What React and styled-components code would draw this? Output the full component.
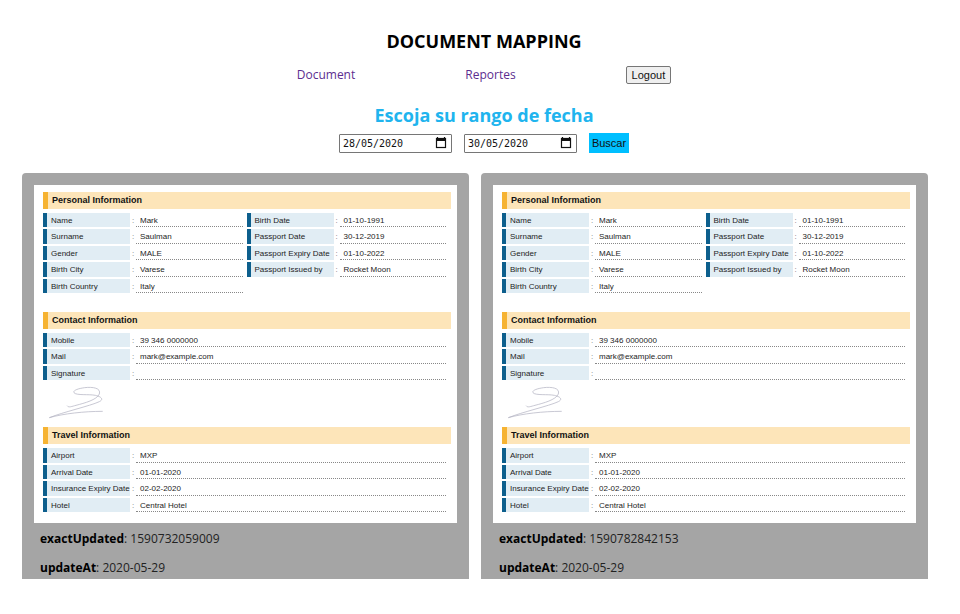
import React from 'react';
import styled, { createGlobalStyle } from 'styled-components';

const GlobalStyle = createGlobalStyle`
  *, *::before, *::after { box-sizing: border-box; }
  body {
    margin: 0;
    background: #fff;
    color: #000;
    font-family: "Open Sans", "Noto Sans", sans-serif;
    font-size: 12px;
    line-height: 16px;
  }
`;

const Page = styled.div`
  padding: 28px 0 32px 8px;
`;

const Title = styled.h1`
  margin: 0;
  font-size: 18px;
  line-height: 26px;
  font-weight: 700;
  text-align: center;
`;

const Nav = styled.nav`
  display: flex;
  justify-content: center;
  align-items: center;
  gap: 110px;
  margin-top: 12px;
`;

const NavLink = styled.a`
  color: #5c2d8f;
  text-decoration: none;
`;

const LogoutButton = styled.button`
  height: 18px;
  padding: 0 5px;
  border: 1px solid #767676;
  border-radius: 2px;
  background: #efefef;
  color: #111;
  font: 11px/16px "Liberation Sans", Arial, sans-serif;
`;

const Heading = styled.h2`
  margin: 18px 0 5px;
  color: #20b4ee;
  font-size: 18px;
  line-height: 26px;
  font-weight: 700;
  text-align: center;
`;

const Filters = styled.form`
  display: flex;
  justify-content: center;
  align-items: center;
  gap: 12px;
`;

const DateField = styled.label`
  display: flex;
  align-items: center;
  width: 113px;
  height: 19px;
  padding: 0 4px 0 3px;
  border: 1px solid #767676;
  border-radius: 1px;
`;

const DateInput = styled.input`
  flex: 1;
  min-width: 0;
  height: 17px;
  padding: 0;
  border: 0;
  outline: 0;
  background: transparent;
  color: #111;
  font: 10px/17px "DejaVu Sans Mono", monospace;
`;

const SearchButton = styled.button`
  height: 20px;
  padding: 0 3px;
  border: 0;
  background: #00bfff;
  color: #111;
  font: 11px/20px "Liberation Sans", Arial, sans-serif;
`;

const Cards = styled.main`
  display: grid;
  grid-template-columns: 1fr 1fr;
  gap: 12px;
  margin: 20px 32px 0 14px;
`;

const Card = styled.article`
  padding: 12px 12px 0;
  border-radius: 4px 4px 0 0;
  background: #a5a5a5;
`;

const Sheet = styled.div`
  padding: 7px 6px 11px 9px;
  background: #fff;
  color: #1c1c1c;
  font-family: "Liberation Sans", Arial, sans-serif;
  font-size: 8px;
`;

const SectionTitle = styled.h3`
  margin: 0 0 4px;
  padding-left: 4px;
  border-left: 5px solid #f6b332;
  background: #fde5b9;
  color: #111;
  font-size: 9px;
  line-height: 17px;
  font-weight: 700;
`;

const Fields = styled.dl`
  display: grid;
  grid-template-columns: repeat(${(p) => p.$columns}, 1fr);
  grid-template-rows: repeat(${(p) => p.$rows}, minmax(0, 1fr));
  grid-auto-flow: column;
  gap: 2px 4px;
  height: ${(p) => p.$height}px;
  margin: 0 5px ${(p) => p.$after}px 0;
`;

const Field = styled.div`
  display: grid;
  grid-template-columns: 87px 6px 1fr;
  grid-template-rows: minmax(0, 1fr);
  line-height: 15px;
`;

const FieldName = styled.dt`
  padding-left: 4px;
  border-left: 4px solid #0d5f8d;
  background: #e1edf4;
  white-space: nowrap;
`;

const Colon = styled.span`
  padding-left: 2px;
  color: #777;
`;

const FieldValue = styled.dd`
  margin: 0;
  padding-left: 4px;
  border-bottom: 1px dotted #888;
`;

const SignatureSvg = styled.svg`
  display: block;
  width: 80px;
  height: 45px;
  margin-bottom: 2px;
`;

const MetaList = styled.div`
  display: flex;
  flex-direction: column;
  gap: 13px;
  padding: 8px 6px 3px;
`;

const Meta = styled.p`
  margin: 0;
  color: #222;
`;

const MetaName = styled.strong`
  color: #000;
`;

const sections = [
  {
    title: 'Personal Information',
    columns: 2,
    rows: 5,
    height: 80,
    after: 19,
    fields: [
      ['Name', 'Mark'],
      ['Surname', 'Saulman'],
      ['Gender', 'MALE'],
      ['Birth City', 'Varese'],
      ['Birth Country', 'Italy'],
      ['Birth Date', '01-10-1991'],
      ['Passport Date', '30-12-2019'],
      ['Passport Expiry Date', '01-10-2022'],
      ['Passport Issued by', 'Rocket Moon'],
    ],
  },
  {
    title: 'Contact Information',
    columns: 1,
    rows: 3,
    height: 47,
    after: 0,
    signed: true,
    fields: [
      ['Mobile', '39 346 0000000'],
      ['Mail', 'mark@example.com'],
      ['Signature', ''],
    ],
  },
  {
    title: 'Travel Information',
    columns: 1,
    rows: 4,
    height: 64,
    after: 0,
    fields: [
      ['Airport', 'MXP'],
      ['Arrival Date', '01-01-2020'],
      ['Insurance Expiry Date', '02-02-2020'],
      ['Hotel', 'Central Hotel'],
    ],
  },
];

const documents = [
  { exactUpdated: '1590732059009', updateAt: '2020-05-29' },
  { exactUpdated: '1590782842153', updateAt: '2020-05-29' },
];

function CalendarIcon() {
  return (
    <svg width="12" height="12" viewBox="0 0 12 12" aria-hidden="true">
      <path d="M2.5 0v2M9.5 0v2" stroke="#111" strokeWidth="1.2" />
      <path d="M1 1h10v3H1z" fill="#111" />
      <rect x="1.5" y="1.5" width="9" height="9" fill="none" stroke="#111" strokeWidth="1.2" />
    </svg>
  );
}

function Signature() {
  return (
    <SignatureSvg viewBox="9 0 240 135" role="img" aria-label="Signature">
      <path
        d="M82 78C86 84 96 79 108 76C134 69 170 60 178 42C184 24 158 20 134 23C112 26 98 32 102 38C108 47 148 42 166 46C184 50 192 58 178 65C150 78 70 96 28 113C70 101 132 94 187 94"
        fill="none"
        stroke="#b4b4c2"
        strokeWidth="2.2"
        strokeLinecap="round"
      />
    </SignatureSvg>
  );
}

function DocumentCard({ doc }) {
  return (
    <Card>
      <Sheet>
        {sections.map((s) => (
          <section key={s.title}>
            <SectionTitle>{s.title}</SectionTitle>
            <Fields $columns={s.columns} $rows={s.rows} $height={s.height} $after={s.after}>
              {s.fields.map(([name, value]) => (
                <Field key={name}>
                  <FieldName>{name}</FieldName>
                  <Colon>:</Colon>
                  <FieldValue>{value}</FieldValue>
                </Field>
              ))}
            </Fields>
            {s.signed && <Signature />}
          </section>
        ))}
      </Sheet>
      <MetaList>
        <Meta><MetaName>exactUpdated</MetaName>: {doc.exactUpdated}</Meta>
        <Meta><MetaName>updateAt</MetaName>: {doc.updateAt}</Meta>
      </MetaList>
    </Card>
  );
}

export default function App() {
  return (
    <Page>
      <GlobalStyle />
      <Title>DOCUMENT MAPPING</Title>
      <Nav>
        <NavLink href="#document">Document</NavLink>
        <NavLink href="#reportes">Reportes</NavLink>
        <LogoutButton type="button">Logout</LogoutButton>
      </Nav>
      <Heading>Escoja su rango de fecha</Heading>
      <Filters onSubmit={(e) => e.preventDefault()}>
        <DateField>
          <DateInput type="text" defaultValue="28/05/2020" aria-label="Desde" />
          <CalendarIcon />
        </DateField>
        <DateField>
          <DateInput type="text" defaultValue="30/05/2020" aria-label="Hasta" />
          <CalendarIcon />
        </DateField>
        <SearchButton type="submit">Buscar</SearchButton>
      </Filters>
      <Cards>
        {documents.map((doc) => (
          <DocumentCard key={doc.exactUpdated} doc={doc} />
        ))}
      </Cards>
    </Page>
  );
}
